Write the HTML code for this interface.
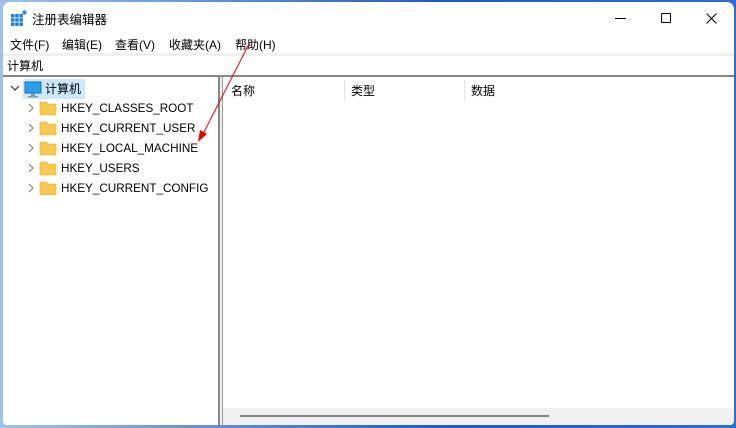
<!DOCTYPE html>
<html><head><meta charset="utf-8"><style>
*{margin:0;padding:0;box-sizing:border-box}
body{width:736px;height:428px;overflow:hidden;background:linear-gradient(90deg,#9ec3e6,#1e5bc8 60%,#2a6fd6);font-family:"Liberation Sans","Noto Sans CJK SC",sans-serif;font-size:12px;color:#000;position:relative}
.win{position:absolute;left:3px;top:2px;width:731px;height:423px;background:#fff;border-radius:7px 7px 4px 4px;overflow:hidden}
.abs{position:absolute;white-space:nowrap}
.k{font-size:11.7px}
</style></head><body>
<div class="win">
 <svg class="abs" style="left:8px;top:8px" width="16" height="16" viewBox="0 0 16 16">
  <g fill="#1e7fd6"><rect x="0" y="4" width="3.5" height="3.5"/><rect x="4.2" y="4" width="3.5" height="3.5"/><rect x="8.4" y="4" width="3.5" height="3.5"/><rect x="0" y="8.2" width="3.5" height="3.5"/><rect x="4.2" y="8.2" width="3.5" height="3.5"/><rect x="8.4" y="8.2" width="3.5" height="3.5"/><rect x="0" y="12.4" width="3.5" height="3.5"/><rect x="4.2" y="12.4" width="3.5" height="3.5"/><rect x="8.4" y="12.4" width="3.5" height="3.5"/></g>
  <circle cx="13.5" cy="2.5" r="2.2" fill="#2a8be0"/>
 </svg>
 <div class="abs" style="left:29px;top:7px;font-size:12.5px">注册表编辑器</div>
 <div class="abs" style="left:612px;top:16px;width:11px;height:1px;background:#000"></div>
 <div class="abs" style="left:658px;top:11px;width:10px;height:10px;border:1px solid #000;border-radius:1px"></div>
 <svg class="abs" style="left:703px;top:11px" width="11" height="11"><path d="M0.5 0.5L10.5 10.5M10.5 0.5L0.5 10.5" stroke="#000" stroke-width="1"/></svg>
 <div class="abs" style="left:7px;top:34px">文件(F)</div>
 <div class="abs" style="left:59px;top:34px">编辑(E)</div>
 <div class="abs" style="left:112px;top:34px">查看(V)</div>
 <div class="abs" style="left:166px;top:34px">收藏夹(A)</div>
 <div class="abs" style="left:232px;top:34px">帮助(H)</div>
 <div class="abs" style="left:0;top:51px;width:731px;height:3px;background:#f0f0f0"></div>
 <div class="abs" style="left:4px;top:55px">计算机</div>
 <div class="abs" style="left:0;top:73px;width:731px;height:2px;background:#868686"></div>
 <svg class="abs" style="left:7px;top:82px" width="10" height="8"><path d="M1 2L5 6L9 2" stroke="#333" fill="none" stroke-width="1.2"/></svg>
 <div class="abs" style="left:20px;top:77px;width:62px;height:20px;background:#cce8ff"></div>
 <svg class="abs" style="left:21px;top:79px" width="18" height="17"><rect x="1" y="1" width="16" height="11" fill="#2aa0e8" stroke="#1a6fb0"/><rect x="7" y="12" width="4" height="3" fill="#7a9ab0"/><rect x="4" y="15" width="10" height="1.5" fill="#7a9ab0"/></svg>
 <div class="abs" style="left:42px;top:78px">计算机</div>
 <div class="abs" style="left:215px;top:75px;width:2px;height:348px;background:#888"></div>
 <div class="abs" style="left:217px;top:75px;width:2px;height:348px;background:#f0f0f0"></div>
 <div class="abs" style="left:219px;top:75px;width:1px;height:348px;background:#999"></div>
 <div class="abs" style="left:228px;top:80px">名称</div>
 <div class="abs" style="left:341px;top:78px;width:1px;height:21px;background:#e3e3e3"></div>
 <div class="abs" style="left:348px;top:80px">类型</div>
 <div class="abs" style="left:461px;top:78px;width:1px;height:21px;background:#e3e3e3"></div>
 <div class="abs" style="left:468px;top:80px">数据</div>
 <div class="abs" style="left:220px;top:406px;width:511px;height:17px;background:#f0f0f0"></div>
 <div class="abs" style="left:237px;top:413px;width:309px;height:2px;background:#858585"></div>
</div>
<div style="position:absolute;left:0;top:0">
 <svg class="abs" style="left:27px;top:103px" width="8" height="90"><g stroke="#888" fill="none" stroke-width="1.2"><path d="M2 1L6 5L2 9"/><path d="M2 21L6 25L2 29"/><path d="M2 41L6 45L2 49"/><path d="M2 61L6 65L2 69"/><path d="M2 81L6 85L2 89"/></g></svg>
 <svg class="abs" style="left:39px;top:100px" width="18" height="95"><g fill="#f7c950" stroke="#e0a82e" stroke-width="0.6"><path d="M1 2h6l2 2h8v11H1z"/><path d="M1 22h6l2 2h8v11H1z"/><path d="M1 42h6l2 2h8v11H1z"/><path d="M1 62h6l2 2h8v11H1z"/><path d="M1 82h6l2 2h8v11H1z"/></g></svg>
 <div class="abs k" style="left:61px;top:102px">HKEY_CLASSES_ROOT</div>
 <div class="abs k" style="left:61px;top:122px">HKEY_CURRENT_USER</div>
 <div class="abs k" style="left:61px;top:142px">HKEY_LOCAL_MACHINE</div>
 <div class="abs k" style="left:61px;top:162px">HKEY_USERS</div>
 <div class="abs k" style="left:61px;top:182px">HKEY_CURRENT_CONFIG</div>
 <svg class="abs" style="left:0;top:0" width="736" height="428"><path d="M250 42L203 134" stroke="#e00" stroke-width="1"/><path d="M198 142L200 130L207 134Z" fill="#e00"/></svg>
</div>
</body></html>
